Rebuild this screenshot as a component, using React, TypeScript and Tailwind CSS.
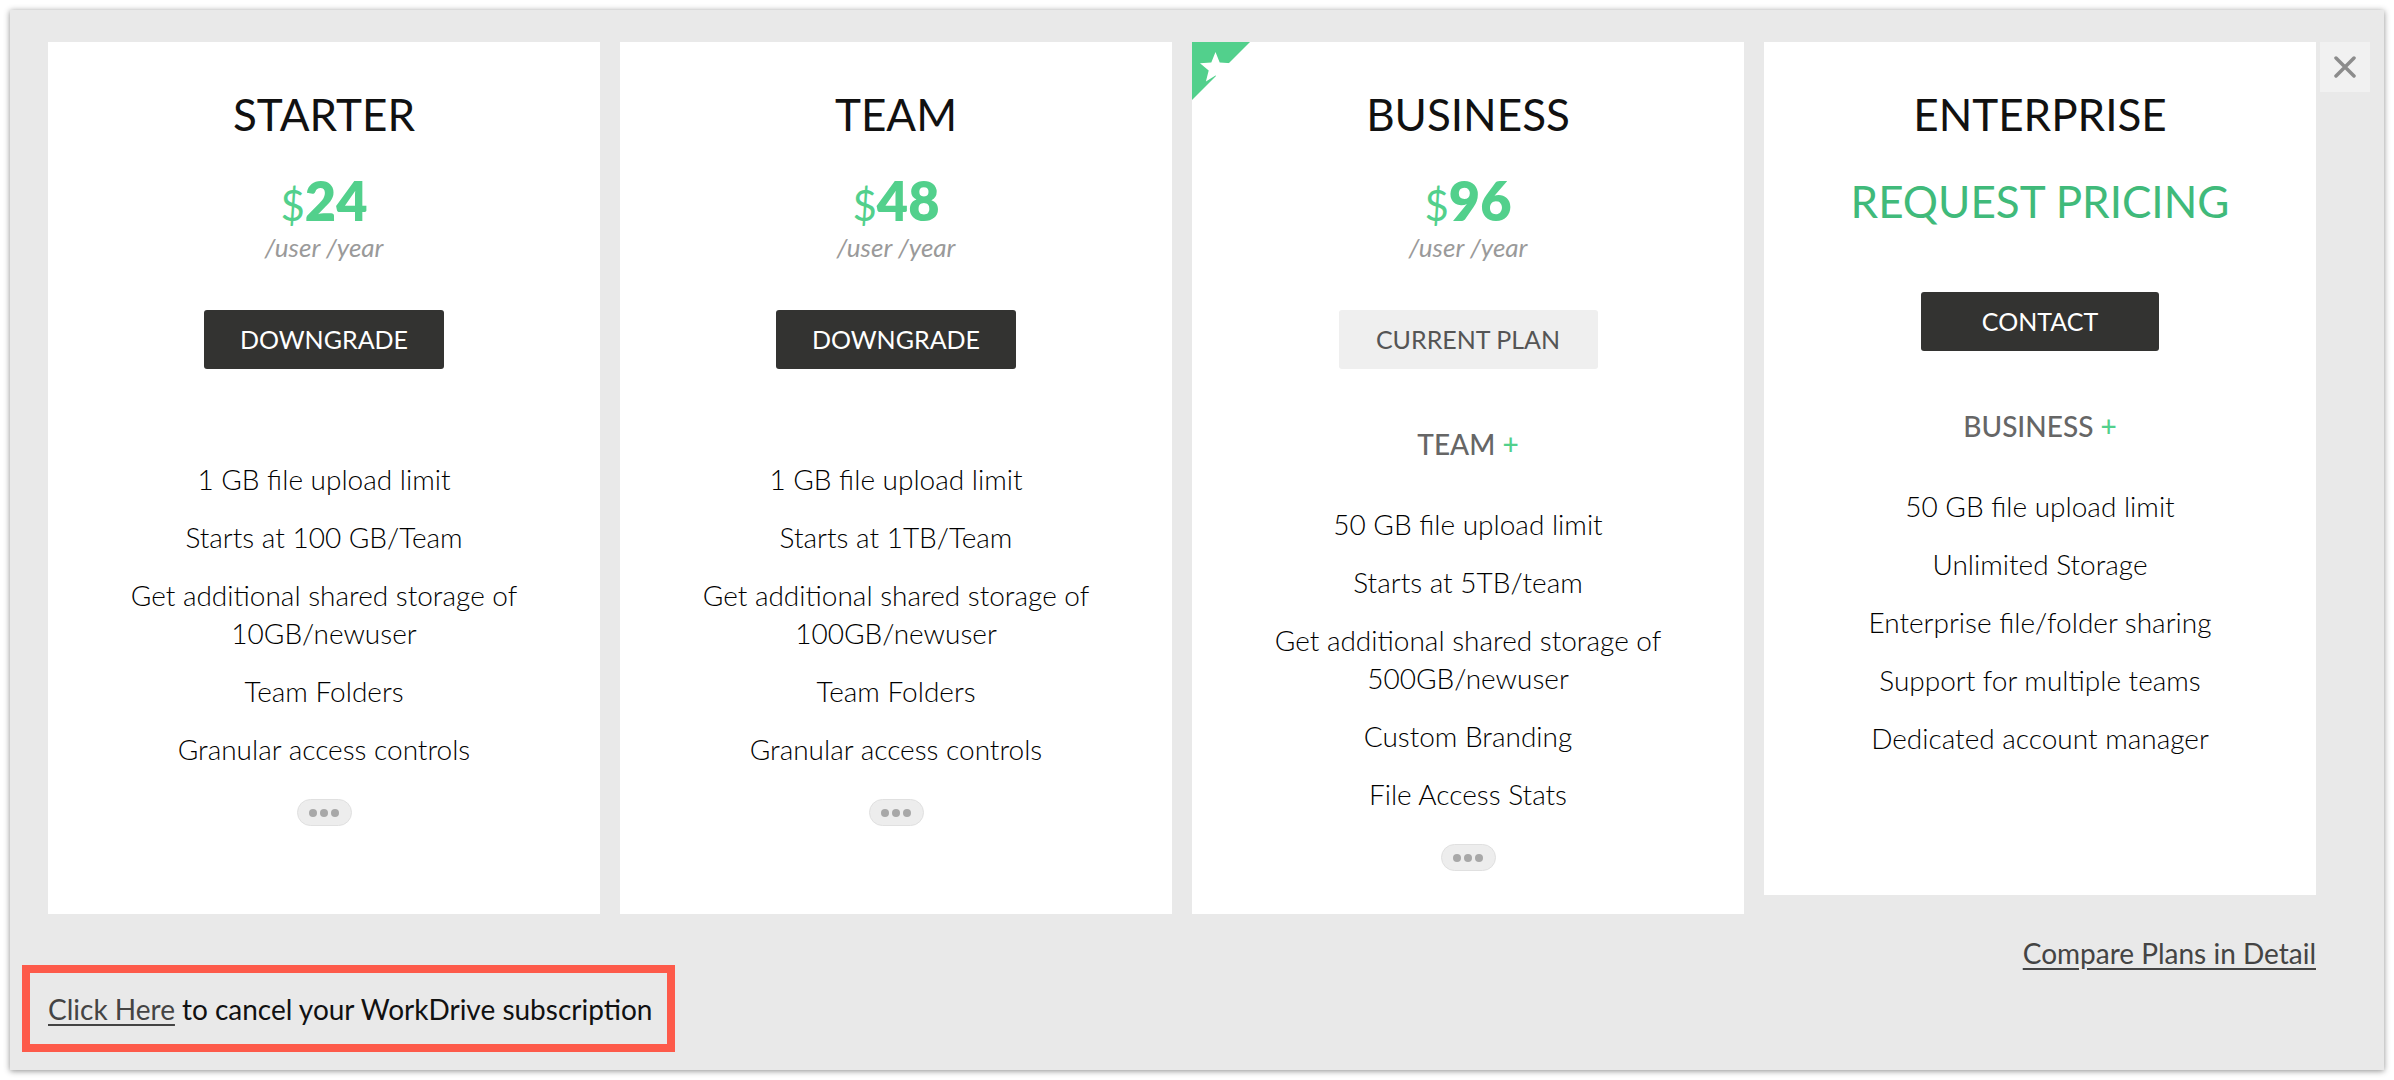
import React from 'react';

interface Plan {
  name: string;
  price?: string;
  button: string;
  current?: boolean;
  base?: string;
  features: string[][];
  more?: boolean;
  featured?: boolean;
}

const PLANS: Plan[] = [
  {
    name: 'STARTER',
    price: '24',
    button: 'DOWNGRADE',
    features: [
      ['1 GB file upload limit'],
      ['Starts at 100 GB/Team'],
      ['Get additional shared storage of', '10GB/newuser'],
      ['Team Folders'],
      ['Granular access controls'],
    ],
    more: true,
  },
  {
    name: 'TEAM',
    price: '48',
    button: 'DOWNGRADE',
    features: [
      ['1 GB file upload limit'],
      ['Starts at 1TB/Team'],
      ['Get additional shared storage of', '100GB/newuser'],
      ['Team Folders'],
      ['Granular access controls'],
    ],
    more: true,
  },
  {
    name: 'BUSINESS',
    price: '96',
    button: 'CURRENT PLAN',
    current: true,
    featured: true,
    base: 'TEAM',
    features: [
      ['50 GB file upload limit'],
      ['Starts at 5TB/team'],
      ['Get additional shared storage of', '500GB/newuser'],
      ['Custom Branding'],
      ['File Access Stats'],
    ],
    more: true,
  },
  {
    name: 'ENTERPRISE',
    button: 'CONTACT',
    base: 'BUSINESS',
    features: [
      ['50 GB file upload limit'],
      ['Unlimited Storage'],
      ['Enterprise file/folder sharing'],
      ['Support for multiple teams'],
      ['Dedicated account manager'],
    ],
  },
];

function StarRibbon() {
  return (
    <svg className="absolute left-0 top-0" width="58" height="58" viewBox="0 0 58 58">
      <polygon points="0,0 58,0 0,58" fill="#52d08c" />
      <polygon
        fill="#ffffff"
        points="23.5,10 27.7,20.6 39,21.3 30.3,28.6 33.1,39.6 23.5,33.5 13.9,39.6 16.7,28.6 8,21.3 19.3,20.6"
      />
    </svg>
  );
}

function MoreDots() {
  return (
    <div className="mt-[31px] flex h-[27px] w-[55px] items-center justify-center gap-[3px] rounded-full border border-[#e0e0e0] bg-[#ededed]">
      <span className="h-[8px] w-[8px] rounded-full bg-[#a8a8a8]" />
      <span className="h-[8px] w-[8px] rounded-full bg-[#a8a8a8]" />
      <span className="h-[8px] w-[8px] rounded-full bg-[#a8a8a8]" />
    </div>
  );
}

function PlanCard({ plan }: { plan: Plan }) {
  const btnWidth = plan.current ? 'w-[259px]' : plan.price ? 'w-[240px]' : 'w-[238px]';
  return (
    <div
      className={`relative flex w-[552px] flex-col items-center bg-white pt-[46px] ${
        plan.price ? 'h-[872px]' : 'h-[853px]'
      }`}
    >
      {plan.featured && <StarRibbon />}
      <h2 className="text-[44px] leading-[52px] font-normal text-[#111111]">{plan.name}</h2>

      {plan.price ? (
        <>
          <div className="mt-[31px] flex items-baseline leading-[60px] text-[#52d08c]">
            <span className="text-[42px] font-normal">$</span>
            <span className="text-[54px] font-extrabold">{plan.price}</span>
          </div>
          <div className="-mt-[3px] text-[26px] leading-[30px] italic text-[#9a9a9a]">/user /year</div>
        </>
      ) : (
        <div className="mt-[37px] text-[44px] leading-[48px] text-[#40ba7a]">REQUEST PRICING</div>
      )}

      <button
        className={`${plan.price ? 'mt-[48px]' : 'mt-[67px]'} ${btnWidth} h-[59px] rounded-[3px] text-[25px] ${
          plan.current ? 'bg-[#efefef] text-[#555555]' : 'bg-[#333331] text-white'
        }`}
      >
        {plan.button}
      </button>

      {plan.base && (
        <div className="mt-[58px] text-[28px] leading-[34px] font-medium text-[#666666]">
          {plan.base} <span className="text-[#52d08c]">+</span>
        </div>
      )}

      <ul className={`${plan.base ? 'mt-[44px]' : 'mt-[91px]'} flex flex-col items-center gap-[20px]`}>
        {plan.features.map((lines, i) => (
          <li key={i} className="text-center text-[28px] leading-[38px] font-light text-[#000000]">
            {lines.map((l, j) => (
              <div key={j}>{l}</div>
            ))}
          </li>
        ))}
      </ul>

      {plan.more && <MoreDots />}
    </div>
  );
}

export default function App() {
  return (
    <div className="min-h-[1080px] w-full bg-white p-[10px] font-['Lato',sans-serif]">
      <div className="h-[1060px] w-[2374px] bg-[#e9e9e9] pl-[12px] pt-[32px] shadow-[0_1px_6px_rgba(0,0,0,0.45)]">
        <div className="ml-[26px] flex items-start">
          <div className="flex items-start gap-[20px]">
            {PLANS.map((p) => (
              <PlanCard key={p.name} plan={p} />
            ))}
          </div>
          <button className="ml-[4px] flex h-[50px] w-[50px] items-center justify-center bg-[#f1f1f1]">
            <svg width="22" height="22" viewBox="0 0 22 22">
              <path d="M2 2 L20 20 M20 2 L2 20" stroke="#8c8c8c" strokeWidth="3.5" strokeLinecap="round" />
            </svg>
          </button>
        </div>

        <div className="ml-[26px] mt-[22px] h-[29px] w-[2268px] text-right">
          <a className="text-[28px] leading-[34px] text-[#444444] underline underline-offset-[4px]">
            Compare Plans in Detail
          </a>
        </div>

        <div className="flex h-[87px] w-[653px] items-center border-[8px] border-[#fd5a4a] pl-[18px] text-[28px] text-[#111111]">
          <a className="text-[#444444] underline underline-offset-[4px]">Click Here</a>
          <span className="ml-[7px]">to cancel your WorkDrive subscription</span>
        </div>
      </div>
    </div>
  );
}
